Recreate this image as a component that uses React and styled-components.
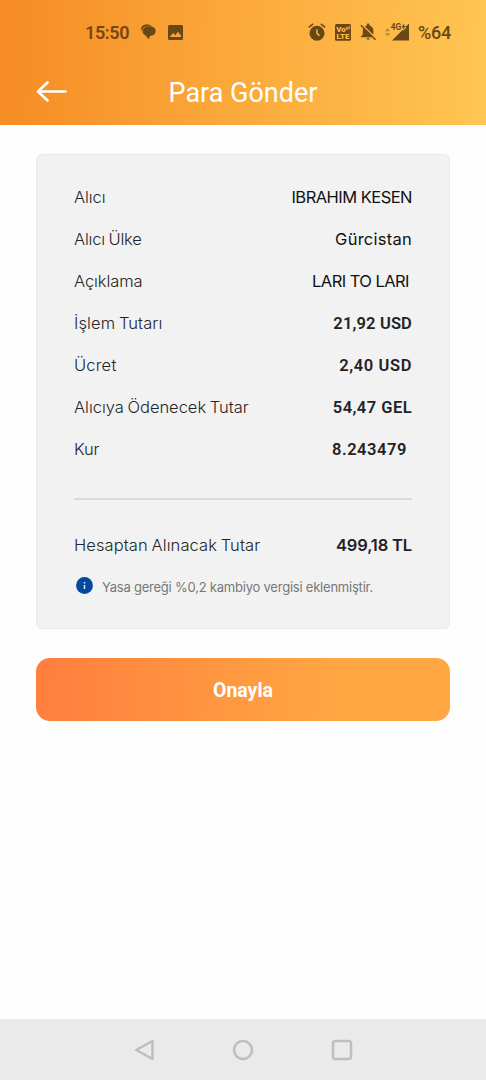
import React from 'react';
import styled, { createGlobalStyle } from 'styled-components';

const transfer = [
	{ label: 'Alıcı', value: 'IBRAHIM KESEN', labelTracking: -0.1, tracking: -0.53 },
	{ label: 'Alıcı Ülke', value: 'Gürcistan', labelTracking: -0.18, tracking: 0.25 },
	{ label: 'Açıklama', value: 'LARI TO LARI', labelTracking: -0.1, tracking: -0.55, inset: 3 },
	{ label: 'İşlem Tutarı', value: '21,92 USD', labelTracking: 0.1, tracking: 0.15, amount: true },
	{ label: 'Ücret', value: '2,40 USD', labelTracking: 0.2, tracking: 0.6, amount: true },
	{ label: 'Alıcıya Ödenecek Tutar', value: '54,47 GEL', labelTracking: -0.02, tracking: 0.45, amount: true },
	{ label: 'Kur', value: '8.243479', labelTracking: -0.2, tracking: 0.55, amount: true, inset: 5 },
];

const ChatIcon = () => (
	<Icon width="15" height="16" viewBox="0 0 15 16">
		<path d="M6 .6C2.600.5.2 2.300.2 4.900c0 1 .3 1.800.8 2.500C1.300 3.900 4.300 1.700 8.600 1.700h2C9.500 1 7.800.6 6 .6z" />
		<path d="M8.400 2.300c3.700 0 6.300 1.900 6.300 4.800 0 2.700-2.400 4.700-5.700 5L7.700 15.300 4.600 11.600C2.800 10.800 1.700 9.300 1.700 7.300c0-2.900 2.800-5 6.700-5z" />
	</Icon>
);

const ImageIcon = () => (
	<Icon width="15" height="15" viewBox="0 0 15 15">
		<path fillRule="evenodd" d="M1.500 0h12A1.500 1.500 0 0 1 15 1.500v12a1.500 1.500 0 0 1-1.500 1.500h-12A1.500 1.500 0 0 1 0 13.500v-12A1.500 1.500 0 0 1 1.500 0zM2.200 12h10.700v-1.800L9.800 6.800 7.500 10.200 5.300 8 2.200 11z" />
	</Icon>
);

const AlarmIcon = () => (
	<Icon width="18" height="18" viewBox="0 0 18 18">
		<circle cx="9" cy="10.300" r="7.500" />
		<path d="M.8 4.300 5.200.8M17.200 4.300 12.800.8" stroke="currentColor" strokeWidth="1.500" />
		<path d="M9 6.300v4.300l2.500 2" fill="none" stroke="#fdb746" strokeWidth="1.400" />
	</Icon>
);

const VolteIcon = () => (
	<Icon width="16" height="17" viewBox="0 0 16 17">
		<rect width="16" height="16.800" rx="1.500" />
		<VolteText x="1.300" y="7.900" textLength="9.400">Vo</VolteText>
		<path d="M11.300 6V3h1.300v3M13.900 5.500V2.500h.9v2.500" fill="none" stroke="#fdb94a" strokeWidth=".7" />
		<VolteText x="1.500" y="15.200" textLength="13" lengthAdjust="spacingAndGlyphs">LTE</VolteText>
	</Icon>
);

const BellOffIcon = () => (
	<Icon width="17" height="18" viewBox="0 0 17 18">
		<path d="M3.600 4.900 13 14.300H1v-1l1.800-1.800V7.800c0-1.100.3-2.100.8-2.900zM5 3.500c.5-.5 1.100-.8 1.800-1V1.800c0-1.700 2.700-1.700 2.700 0v.7c2.500.6 3.900 2.800 3.900 5.300v3.900zM6.400 15.300h3.500a1.800 1.800 0 0 1-3.500 0z" />
		<path d="m.9 2.300 14.700 14.400" stroke="currentColor" strokeWidth="1.500" />
	</Icon>
);

const SignalIcon = () => (
	<Icon width="26" height="20" viewBox="0 0 26 20">
		<path d="m4.600 6 2.600 3.300H2zM2 11.200h5.200l-2.600 3.300z" opacity=".42" />
		<path d="M26 1.500v17H9z" />
		<path d="M20 0h3v6l-3 3z" fill="#feba4b" />
		<SignalText x="7.800" y="7.900" textLength="15" lengthAdjust="spacingAndGlyphs">4G+</SignalText>
	</Icon>
);

const App = () => (
	<Screen>
		<GlobalStyle />
		<Header>
			<StatusBar>
				<Clock>15:50</Clock>
				<ChatIcon />
				<ImageIcon />
				<StatusRight>
					<AlarmIcon />
					<VolteIcon />
					<BellOffIcon />
					<Network>
						<SignalIcon />
						<Battery>%64</Battery>
					</Network>
				</StatusRight>
			</StatusBar>
			<TitleBar>
				<BackButton aria-label="Geri">
					<svg width="32" height="22" viewBox="0 0 32 22" fill="none" stroke="#fff" strokeWidth="2.600" strokeLinecap="round" strokeLinejoin="round">
						<path d="M11.500 1.500 2 10.500l9.500 9M2 10.500h27.500" />
					</svg>
				</BackButton>
				<Title>Para Gönder</Title>
			</TitleBar>
		</Header>
		<Content>
			<Card>
				{transfer.map(row => {
					const Text = row.amount ? Amount : Value;
					return (
						<Row key={row.label}>
							<Label $tracking={row.labelTracking}>{row.label}</Label>
							<Text $tracking={row.tracking} $inset={row.inset}>{row.value}</Text>
						</Row>
					);
				})}
				<Divider />
				<Row>
					<Label $tracking={0.09}>Hesaptan Alınacak Tutar</Label>
					<Total $tracking={-0.15}>499,18 TL</Total>
				</Row>
				<Note>
					<svg width="17" height="17" viewBox="0 0 17 17">
						<circle cx="8.500" cy="8.500" r="8.400" fill="#04499b" />
						<path d="M8.500 4.900v1.500M8.500 7.900v4" stroke="#dfeaf5" strokeWidth="1.500" />
					</svg>
					<NoteText>Yasa gereği %0,2 kambiyo vergisi eklenmiştir.</NoteText>
				</Note>
			</Card>
			<SubmitButton>Onayla</SubmitButton>
		</Content>
		<NavBar>
			<svg width="22" height="22" viewBox="0 0 22 22">
				<path d="M19.500 2v18L3.200 11z" />
			</svg>
			<svg width="22" height="22" viewBox="0 0 22 22">
				<circle cx="11" cy="11" r="9" />
			</svg>
			<svg width="22" height="22" viewBox="0 0 22 22">
				<rect x="2" y="2" width="18" height="18" rx="2.500" />
			</svg>
		</NavBar>
	</Screen>
);

const GlobalStyle = createGlobalStyle`
	* {
		box-sizing: border-box;
	}
	body {
		margin: 0;
		background: #fff;
	}
`;

const Screen = styled.div`
	display: flex;
	flex-direction: column;
	width: 486px;
	height: 1080px;
	background: #fefefe;
	font-family: Inter, sans-serif;
`;

const Header = styled.header`
	height: 125px;
	background: linear-gradient(92deg, #f68d25 3%, #fba83a 47%, #ffc552 100%);
	font-family: Roboto, sans-serif;
`;

const StatusBar = styled.div`
	display: flex;
	align-items: center;
	height: 64px;
	padding: 0 35px 0 85px;
	color: #6a4716;

	> svg {
		margin-left: 12px;
	}
`;

const Icon = styled.svg`
	flex: none;
	fill: currentColor;
`;

const Clock = styled.span`
	width: 44px;
	font-size: 18px;
	font-weight: 600;
	letter-spacing: -0.4px;
	color: #774610;
`;

const StatusRight = styled.div`
	display: flex;
	align-items: center;
	gap: 9px;
	margin-left: auto;
`;

const Network = styled.div`
	display: flex;
	align-items: center;
	gap: 9px;
	margin-left: -3px;
`;

const Battery = styled.span`
	font-size: 18px;
	font-weight: 500;
	letter-spacing: -0.2px;
`;

const VolteText = styled.text`
	font: 900 8px Roboto, sans-serif;
	fill: #fdb94a;
`;

const SignalText = styled.text`
	font: 700 8.5px Roboto, sans-serif;
`;

const TitleBar = styled.div`
	display: grid;
	grid-template-columns: 50px 1fr 50px;
	align-items: center;
	height: 56px;
	padding: 0 36px;
`;

const BackButton = styled.button`
	display: flex;
	padding: 0;
	border: 0;
	background: none;
`;

const Title = styled.h1`
	margin: 0;
	padding-top: 2px;
	font-size: 27px;
	font-weight: 400;
	text-align: center;
	white-space: nowrap;
	color: #fff;
`;

const Content = styled.main`
	flex: 1;
	padding: 29px 36px 0;
`;

const Card = styled.section`
	height: 475px;
	padding: 21px 37px 0;
	border: 1px solid #e9e9e9;
	border-radius: 6px;
	background: #f2f2f2;
`;

const Row = styled.div`
	display: flex;
	align-items: center;
	justify-content: space-between;
	height: 42px;
	white-space: nowrap;
`;

const Label = styled.span`
	font-size: 16.5px;
	font-weight: 300;
	letter-spacing: ${props => props.$tracking}px;
	word-spacing: -1px;
	color: #252525;
`;

const Value = styled.span`
	margin-right: ${props => props.$inset || 0}px;
	font-size: 16.5px;
	font-weight: 400;
	letter-spacing: ${props => props.$tracking}px;
	color: #111;
`;

const Amount = styled(Value)`
	font-family: Roboto, sans-serif;
	font-weight: 600;
	color: #222226;
`;

const Total = styled(Value)`
	font-weight: 600;
	color: #222226;
`;

const Divider = styled.hr`
	height: 2px;
	margin: 28px 0 24px;
	border: 0;
	background: #dadada;
`;

const Note = styled.div`
	display: flex;
	align-items: center;
	height: 39px;
	padding-left: 2px;
	gap: 9px;
	white-space: nowrap;
`;

const NoteText = styled.span`
	padding-top: 3px;
	font-size: 13px;
	letter-spacing: -0.22px;
	color: #777;
`;

const SubmitButton = styled.button`
	display: block;
	width: 100%;
	height: 63px;
	margin-top: 29px;
	padding: 2px 0 0;
	border: 0;
	border-radius: 14px;
	background: linear-gradient(92deg, #ff803e 3%, #ffa843 76%);
	font: 700 19.5px Roboto, sans-serif;
	color: #fff;
`;

const NavBar = styled.nav`
	display: flex;
	justify-content: space-between;
	align-items: center;
	height: 61px;
	padding: 0 133px;
	background: #eaeaea;

	svg {
		fill: none;
		stroke: #bebebe;
		stroke-width: 2.5;
		stroke-linejoin: round;
	}
`;

export default App;
